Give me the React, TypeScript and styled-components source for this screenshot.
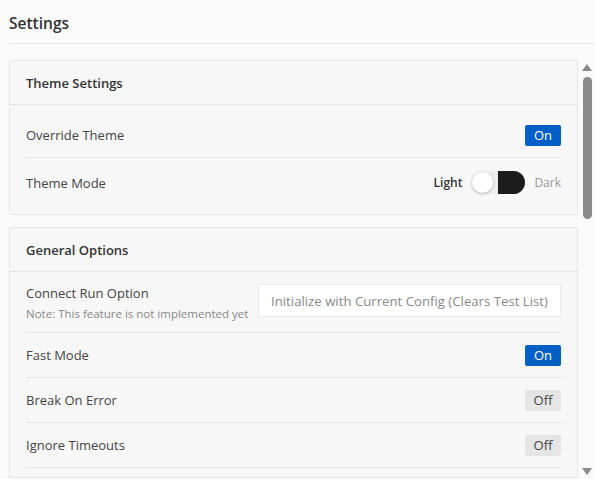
import React from "react";
import styled, { createGlobalStyle } from "styled-components";

const GlobalStyle = createGlobalStyle`
    html, body {
        margin: 0;
        padding: 0;
        background: #fafafa;
        font-family: "Open Sans", "Noto Sans", "Liberation Sans", sans-serif;
        color: #444;
        overflow: hidden;
    }
`;

const Page = styled.div`
    height: 479px;
    display: flex;
    flex-direction: column;
`;

const TitleBar = styled.div`
    margin: 0 2px 0 9px;
    height: 44px;
    display: flex;
    align-items: center;
    border-bottom: 1px solid #e6e6e6;
    box-sizing: border-box;
`;

const Title = styled.h1`
    margin: 0;
    font-size: 15.5px;
    font-weight: 600;
    color: #333;
    padding-top: 3px;
`;

const Main = styled.div`
    flex: 1;
    display: flex;
    min-height: 0;
    padding-top: 16px;
`;

const Content = styled.div`
    flex: 1;
    overflow: hidden;
    padding-left: 9px;
    padding-right: 1px;
    display: flex;
    flex-direction: column;
    gap: 12px;
`;

const Panel = styled.section`
    border: 1px solid #e6e6e6;
    background: #f7f7f7;
    border-radius: 2px;
    flex-shrink: 0;
`;

const PanelHeader = styled.div`
    height: 44px;
    display: flex;
    align-items: center;
    padding: 0 16px;
    box-sizing: border-box;
    border-bottom: 1px solid #e6e6e6;
    font-size: 13px;
    font-weight: 600;
    color: #333;
`;

const PanelBody = styled.div`
    padding: 8px 16px 9px;
`;

const Row = styled.div<{ $top?: boolean; $tall?: boolean; $last?: boolean }>`
    display: flex;
    align-items: ${p => (p.$top ? "flex-start" : "center")};
    justify-content: space-between;
    min-height: ${p => (p.$tall ? "47px" : "45px")};
    padding: ${p => (p.$top ? "3px 0 10px" : p.$tall ? "7px 0 5px" : "5px 0")};
    box-sizing: border-box;
    border-bottom: ${p => (p.$last ? "none" : "1px solid #e6e6e6")};
`;

const LabelBlock = styled.div`
    display: flex;
    flex-direction: column;
    gap: 3px;
`;

const Label = styled.span`
    font-size: 13px;
    line-height: 20px;
    color: #444;
`;

const Note = styled.span`
    font-size: 11.5px;
    line-height: 16px;
    color: #888;
`;

const Toggle = styled.button<{ $on: boolean }>`
    min-width: 36px;
    height: 21px;
    padding: 0 8px;
    border: none;
    border-radius: 2px;
    font-family: inherit;
    font-size: 13px;
    line-height: 21px;
    background: ${p => (p.$on ? "#005fc5" : "#e5e5e5")};
    color: ${p => (p.$on ? "#fff" : "#444")};
`;

const ModeSwitch = styled.div`
    display: flex;
    align-items: center;
    gap: 9px;
`;

const ModeLabel = styled.span<{ $active: boolean }>`
    font-size: 12px;
    font-weight: ${p => (p.$active ? 600 : 400)};
    color: ${p => (p.$active ? "#333" : "#999")};
`;

const Track = styled.div`
    position: relative;
    width: 54px;
    height: 23px;
    display: flex;
`;

const TrackHalf = styled.div<{ $dark: boolean }>`
    flex: 1;
    background: ${p => (p.$dark ? "#1c1c1c" : "#eeeeee")};
    border-radius: ${p => (p.$dark ? "0 12px 12px 0" : "12px 0 0 12px")};
`;

const Knob = styled.div`
    position: absolute;
    left: 1px;
    top: 1px;
    width: 21px;
    height: 21px;
    border-radius: 50%;
    background: #fff;
    box-shadow: 0 1px 3px rgba(0, 0, 0, 0.25);
`;

const TextInput = styled.input`
    width: 303px;
    height: 33px;
    margin-top: 1px;
    box-sizing: border-box;
    border: 1px solid #ebebeb;
    background: #fff;
    padding: 0 12px;
    font-family: inherit;
    font-size: 13.2px;
    color: #444;
    outline: none;

    &::placeholder {
        color: #8a8a8a;
    }
`;

const Scrollbar = styled.div`
    width: 16px;
    flex-shrink: 0;
    display: flex;
    flex-direction: column;
    align-items: center;
    padding: 4px 0 4px;
    gap: 6px;
`;

const Arrow = styled.div<{ $down?: boolean }>`
    width: 0;
    height: 0;
    border-left: 5px solid transparent;
    border-right: 5px solid transparent;
    ${p => (p.$down ? "border-top: 7px solid #8a8a8a;" : "border-bottom: 7px solid #8a8a8a;")}
    flex-shrink: 0;
`;

const ThumbTrack = styled.div`
    flex: 1;
    width: 9px;
`;

const Thumb = styled.div`
    width: 9px;
    height: 142px;
    border-radius: 5px;
    background: #8b8b8b;
`;

export default function App() {
    return (
        <>
            <GlobalStyle />
            <Page>
                <TitleBar>
                    <Title>Settings</Title>
                </TitleBar>
                <Main>
                    <Content>
                        <Panel>
                            <PanelHeader>Theme Settings</PanelHeader>
                            <PanelBody>
                                <Row>
                                    <Label>Override Theme</Label>
                                    <Toggle $on>On</Toggle>
                                </Row>
                                <Row $tall $last>
                                    <Label>Theme Mode</Label>
                                    <ModeSwitch>
                                        <ModeLabel $active>Light</ModeLabel>
                                        <Track>
                                            <TrackHalf $dark={false} />
                                            <TrackHalf $dark />
                                            <Knob />
                                        </Track>
                                        <ModeLabel $active={false}>Dark</ModeLabel>
                                    </ModeSwitch>
                                </Row>
                            </PanelBody>
                        </Panel>
                        <Panel>
                            <PanelHeader>General Options</PanelHeader>
                            <PanelBody>
                                <Row $top>
                                    <LabelBlock>
                                        <Label>Connect Run Option</Label>
                                        <Note>Note: This feature is not implemented yet</Note>
                                    </LabelBlock>
                                    <TextInput placeholder="Initialize with Current Config (Clears Test List)" />
                                </Row>
                                <Row>
                                    <Label>Fast Mode</Label>
                                    <Toggle $on>On</Toggle>
                                </Row>
                                <Row>
                                    <Label>Break On Error</Label>
                                    <Toggle $on={false}>Off</Toggle>
                                </Row>
                                <Row>
                                    <Label>Ignore Timeouts</Label>
                                    <Toggle $on={false}>Off</Toggle>
                                </Row>
                            </PanelBody>
                        </Panel>
                    </Content>
                    <Scrollbar>
                        <Arrow />
                        <ThumbTrack>
                            <Thumb />
                        </ThumbTrack>
                        <Arrow $down />
                    </Scrollbar>
                </Main>
            </Page>
        </>
    );
}
